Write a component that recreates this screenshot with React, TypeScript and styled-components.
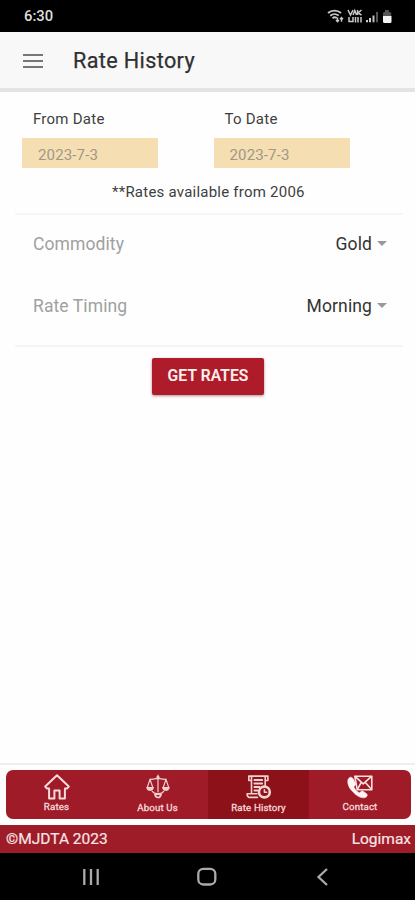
import React from "react";
import styled, { createGlobalStyle } from "styled-components";

const GlobalStyle = createGlobalStyle`
  * { box-sizing: border-box; }
  body { margin: 0; background: #fff; font-family: Roboto, "Liberation Sans", sans-serif; }
`;

const Screen = styled.div`
  display: flex;
  flex-direction: column;
  width: 415px;
  height: 900px;
  overflow: hidden;
  background: #fefefe;
`;

const StatusBar = styled.div`
  display: flex;
  justify-content: space-between;
  flex: none;
  height: 32px;
  padding: 0 21px 0 24px;
  background: #000;
  color: #dedede;
  font-size: 14.8px;
  font-weight: 500;
  line-height: 33px;
`;

const StatusIcons = styled.svg`
  display: block;
  width: 68px;
  height: 32px;
`;

const Header = styled.header`
  display: flex;
  align-items: center;
  flex: none;
  height: 60px;
  padding: 0 23px 3px;
  background: #f8f8f8;
  border-bottom: 4px solid #e4e4e4;
`;

const MenuButton = styled.button`
  display: flex;
  flex-direction: column;
  gap: 4px;
  width: 20px;
  margin: 4px 30px 0 0;
  padding: 0;
  border: 0;
  background: none;
`;

const MenuLine = styled.span`
  height: 2px;
  background: #777;
`;

const Title = styled.h1`
  margin: 4px 0 0;
  color: #303030;
  font-size: 21.6px;
  font-weight: 400;
  letter-spacing: 0.37px;
  line-height: 28px;
  -webkit-text-stroke: 0.25px #303030;
`;

const Content = styled.main`
  flex: 1;
  padding: 15px 12px 0 15px;
`;

const DateGrid = styled.div`
  display: grid;
  grid-template-columns: 191.5px 191.5px;
  padding-left: 7px;
`;

const DateLabel = styled.label`
  display: block;
  padding-left: 11px;
  color: #3f3f3f;
  font-size: 15px;
  letter-spacing: 0.25px;
  line-height: 24px;
`;

const DateValue = styled.div`
  width: 136px;
  height: 30px;
  margin-top: 7px;
  padding-left: 16px;
  background: #f5deb1;
  color: #a0978a;
  font-size: 15px;
  letter-spacing: 0.15px;
  line-height: 34px;
`;

const Note = styled.p`
  margin: 12px 0 0;
  padding-left: 97px;
  color: #404040;
  font-size: 15px;
  letter-spacing: 0.23px;
  line-height: 24px;
  white-space: nowrap;
`;

const Options = styled.section`
  height: 134px;
  margin-top: 9px;
  padding: 0 16px 0 18px;
  border-top: 2px solid #f6f6f6;
  border-bottom: 2px solid #f5f5f5;
`;

const OptionRow = styled.div`
  display: flex;
  justify-content: space-between;
  height: 62px;
  font-size: 17.5px;
  line-height: 59px;
`;

const OptionLabel = styled.span`
  color: #a0a0a0;
  letter-spacing: 0.1px;
`;

const OptionValue = styled.span`
  display: flex;
  align-items: center;
  height: 59px;
  color: #333;
  letter-spacing: 0.12px;
`;

const Caret = styled.span`
  margin: 0 0 3px 5px;
  border: 5px solid transparent;
  border-top-color: #999;
  border-bottom: 0;
`;

const SubmitButton = styled.button`
  display: block;
  width: 112px;
  height: 37px;
  margin: 11px 0 0 137px;
  padding: 0 0 1px;
  border: 0;
  border-radius: 2px;
  background: #ae1b2b;
  box-shadow: 0 1px 3px #ad8d82;
  color: #fff1ee;
  font: 500 15.6px Roboto, sans-serif;
  letter-spacing: 0.15px;
  -webkit-text-stroke: 0.2px #fff1ee;
`;

const TabArea = styled.div`
  flex: none;
  height: 62px;
  padding: 5px 4px 7px 6px;
  border-top: 2px solid #efefef;
`;

const TabBar = styled.nav`
  display: grid;
  grid-template-columns: 101px 101px 101px 102px;
  height: 49px;
  overflow: hidden;
  border-radius: 7px;
  background: #a01b28;
`;

const Tab = styled.a<{ $active?: boolean; $lift?: number }>`
  display: flex;
  flex-direction: column;
  align-items: center;
  padding-top: 3px;
  background: ${(p) => (p.$active ? "#8d1119" : "transparent")};
  color: #f6dbdc;
  svg { display: block; flex: none; }
  span {
    margin-top: ${(p) => 1 - (p.$lift ?? 0)}px;
    font-size: 9.7px;
    letter-spacing: 0.15px;
    line-height: 12px;
    -webkit-text-stroke: 0.3px #f6dbdc;
  }
`;

const Footer = styled.footer`
  display: flex;
  justify-content: space-between;
  flex: none;
  height: 28px;
  padding: 0 4px 0 6px;
  background: #9e1b28;
  color: #f7e5e5;
  font-size: 15.5px;
  line-height: 28px;
  -webkit-text-stroke: 0.2px #f7e5e5;
`;

const SystemNav = styled.div`
  display: flex;
  justify-content: center;
  flex: none;
  height: 47px;
  background: #000;
`;

const HouseIcon = () => (
  <svg width="28" height="28" viewBox="0 0 28 28" fill="none" stroke="#f6dbdc" strokeWidth="2" strokeLinejoin="round">
    <path d="M14 2.2 2.2 13.5l1.9 2h2v9.9h5.3v-8h5.2v8h5.3v-9.9h2l1.9-2Z" />
  </svg>
);

const ScalesIcon = () => (
  <svg width="28" height="28" viewBox="0 0 28 28" fill="none" stroke="#f0ced0" strokeWidth="1.2" strokeLinecap="round">
    <path d="M14 2v17M6 6.2c3 .8 5-.8 8-.8s5 1.6 8 .8M6 6.4 3.3 14.5M6 6.4l2.8 8.1M22 6.4l-2.8 8.1M22 6.4l2.7 8.1" />
    <path d="M3 14.7h6.2c-.4 3.4-5.8 3.4-6.2 0ZM18.8 14.7H25c-.4 3.4-5.8 3.4-6.2 0Z" fill="#f0ced0" />
    <path d="M8.5 18.5c1.8 3.4 6.4 1.2 8.2 3.8M19.5 18.5c-1.8 3.4-6.4 1.2-8.2 3.8M10.8 21.5c1.3 4 5.2 4.1 6.4 0" strokeWidth="1.6" />
    <circle cx="14" cy="4.5" r="1.1" fill="#f0ced0" />
  </svg>
);

const HistoryIcon = () => (
  <svg width="28" height="28" viewBox="0 0 28 28" fill="none" stroke="#f1d2d1" strokeWidth="1.6" strokeLinejoin="round" strokeLinecap="round">
    <path d="M6.5 7.5H3.8V3.1h16.4v10M20.2 3.1h2.7v4.4h-2.7M6.5 3.1v17.6M12.5 24.4H4.8c-1.7 0-2.7-1.3-2.7-3.6H12" />
    <path d="M9.4 7h7.8M9.4 10.5h7.8M9.4 14h5.2M9.4 17.5h3" strokeWidth="1.8" />
    <circle cx="19.4" cy="19" r="5.4" strokeWidth="2.6" />
    <path d="M19.4 16.8v2.5h2.2" />
  </svg>
);

const ContactIcon = () => (
  <svg width="28" height="28" viewBox="0 0 28 28" fill="none" stroke="#f8dfe0" strokeWidth="1.6" strokeLinejoin="round">
    <path d="M8.8 3.2h17v13.5H11.2Z" />
    <path d="m8.8 3.2 8.4 7.6 8.6-7.6M11.2 16.7l4-7.2M25.8 16.7l-6.4-7.2" />
    <path d="M3 4.9c-2.2 2-1.5 7.6 2.2 12.2 4.4 5.4 10.2 9 14.3 7.3 2-.9 2.4-2.6.9-3.8l-3-2.2c-1.7-1-2.8.3-3.8 1.4-2.2-.5-5.5-4.1-5.7-6.5 1.7-.8 2.2-2 1.4-3.6L7.5 6.2C6.3 4.2 4.8 3.5 3 4.9Z" fill="#fff4f3" stroke="#fff4f3" strokeWidth=".5" />
  </svg>
);

const options = [
  { label: "Commodity", value: "Gold" },
  { label: "Rate Timing", value: "Morning" },
];

export default function App() {
  return (
    <Screen>
      <GlobalStyle />
      <StatusBar>
        <span>6:30</span>
        <StatusIcons viewBox="0 0 68 32" fill="none" stroke="#c8c8c8">
          <path d="M2 13c3.5-3.2 9.5-3.2 13 0M4.3 15.7c2.5-2.2 6-2.2 8.4 0M6.5 18.2c1.4-1.2 3-1.2 4.3 0" strokeWidth="1.8" />
          <path d="M11.5 17.5v4.2M10 20l1.5 1.7L13 20M15.5 21.7v-4.2M14 19.2l1.5-1.7 1.5 1.7" strokeWidth="1.4" />
          <path d="m22 10 2.5 5 2.5-5M27 15l1.8-4.5 1.7 4.5M31.5 10v5M35.5 10 32 13l3.5 2M23 17v4.5h4V17M29.5 22.5V17M32 17v5.5M35 17v5.5" strokeWidth="1.5" />
          <path d="M41 20v2.3M44 18v4.3" stroke="#cfcfcf" strokeWidth="2" />
          <path d="M47.5 15.5v6.8" stroke="#bdbdbd" strokeWidth="2" />
          <path d="M51 12v10.3" stroke="#555" strokeWidth="2" />
          <path d="M57 16v-3.2l2-1.1V10h3.8v1.7l2.4 1.1V16Z" fill="#555" stroke="none" />
          <path d="M57 16h8.5v5.5q0 1.5-1.5 1.5h-5.5q-1.5 0-1.5-1.5Z" fill="#f3f3f3" stroke="none" />
        </StatusIcons>
      </StatusBar>
      <Header>
        <MenuButton aria-label="Menu"><MenuLine /><MenuLine /><MenuLine /></MenuButton>
        <Title>Rate History</Title>
      </Header>
      <Content>
        <DateGrid>
          <div><DateLabel>From Date</DateLabel><DateValue>2023-7-3</DateValue></div>
          <div><DateLabel>To Date</DateLabel><DateValue>2023-7-3</DateValue></div>
        </DateGrid>
        <Note>**Rates available from 2006</Note>
        <Options>
          {options.map((o) => (
            <OptionRow key={o.label}>
              <OptionLabel>{o.label}</OptionLabel>
              <OptionValue>{o.value}<Caret /></OptionValue>
            </OptionRow>
          ))}
        </Options>
        <SubmitButton>GET RATES</SubmitButton>
      </Content>
      <TabArea>
        <TabBar>
          <Tab $lift={1}><HouseIcon /><span>Rates</span></Tab>
          <Tab><ScalesIcon /><span>About Us</span></Tab>
          <Tab $active><HistoryIcon /><span>Rate History</span></Tab>
          <Tab $lift={1}><ContactIcon /><span>Contact</span></Tab>
        </TabBar>
      </TabArea>
      <Footer><span>©MJDTA 2023</span><span>Logimax</span></Footer>
      <SystemNav>
        <svg width="260" height="47" viewBox="0 0 260 47" fill="none" stroke="#aaa" strokeWidth="2.3">
          <path d="M6.3 16v16M13 16v16M19.7 16v16" />
          <rect x="120.3" y="15.8" width="17" height="15.7" rx="5" />
          <path d="m249 16-8.5 8 8.5 8" />
        </svg>
      </SystemNav>
    </Screen>
  );
}
